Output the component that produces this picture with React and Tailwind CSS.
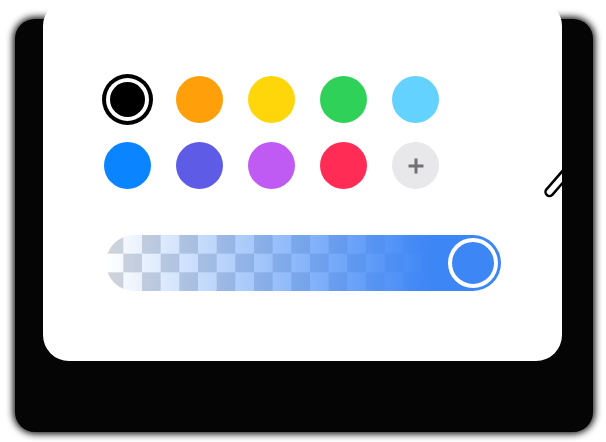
import React from "react";

const colors = [
  "#000000",
  "#FF9F0A",
  "#FFD60A",
  "#30D158",
  "#64D2FF",
  "#0A84FF",
  "#5E5CE6",
  "#BF5AF2",
  "#FF2D55",
];

function Swatch({ color, selected }) {
  if (selected) {
    return (
      <div className="w-[47px] h-[47px] flex items-center justify-center">
        <div className="w-[51px] h-[51px] shrink-0 rounded-full bg-black p-[4px]">
          <div className="w-full h-full rounded-full bg-white p-[4px]">
            <div className="w-full h-full rounded-full bg-black" />
          </div>
        </div>
      </div>
    );
  }
  return <div className="w-[47px] h-[47px] rounded-full" style={{ backgroundColor: color }} />;
}

export default function App() {
  return (
    <div className="w-[606px] h-[442px] bg-white overflow-hidden pt-[19px] pl-[15px]">
      <div className="flex items-start w-[578px] h-[413px] bg-[#050505] rounded-[20px] shadow-[0_0_7px_2px_#111] pl-[28px]">
        <div className="relative -mt-[19px] w-[519px] h-[361px] shrink-0 rounded-[26px] bg-white overflow-hidden pt-[76px] pl-[61px]">
          <div className="grid grid-cols-[repeat(5,47px)] gap-x-[25px] gap-y-[19px]">
            {colors.map((c, i) => (
              <Swatch key={i} color={c} selected={i === 0} />
            ))}
            <div className="w-[47px] h-[47px] rounded-full bg-[#e8e8ea] flex items-center justify-center">
              <svg width="16" height="16" viewBox="0 0 16 16">
                <path d="M8 0.5V15.5M0.5 8H15.5" stroke="#717175" strokeWidth="3" />
              </svg>
            </div>
          </div>
          <div className="mt-[46px] ml-[2px] w-[395px] h-[56px] rounded-full flex items-center justify-end pr-[3px] bg-[image:linear-gradient(to_right,rgba(61,134,246,0),rgba(61,134,246,0.55)_45%,rgb(61,134,246)_82%),conic-gradient(#fff_25%,#d1d5db_0_50%,#fff_0_75%,#d1d5db_0)] bg-[length:100%_100%,37.33px_37.33px] bg-[position:0_0,-1.33px_0]">
            <div className="w-[50px] h-[50px] rounded-full border-[4px] border-white bg-[#3d86f5]" />
          </div>
          <svg className="absolute left-[496px] top-[160px]" width="30" height="42" viewBox="0 0 30 42">
            <rect x="6.5" y="28" width="34" height="8" rx="4" fill="none" stroke="#000" strokeWidth="2.5" transform="rotate(-49 10.5 32)" />
          </svg>
        </div>
      </div>
    </div>
  );
}
